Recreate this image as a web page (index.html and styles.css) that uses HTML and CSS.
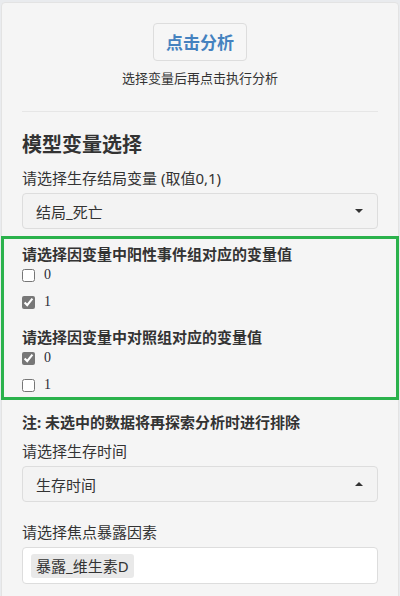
FILE: index.html
```html
<!DOCTYPE html>
<html lang="zh-CN">
    <head>
        <meta charset="UTF-8">
        <meta name="viewport" content="width=device-width, initial-scale=1.0">
        <title>模型变量选择</title>
        <link rel="stylesheet" href="styles.css">
    </head>
    <body>
        <div class="well">
            <div class="run">
                <button type="button" class="btn-run">点击分析</button>
                <p class="hint">选择变量后再点击执行分析</p>
            </div>
            <hr>
            <h3 class="title">模型变量选择</h3>

            <div class="form-group">
                <label class="field-label">请选择生存结局变量 (取值0,1)</label>
                <div class="select">
                    <span>结局_死亡</span>
                    <span class="caret"></span>
                </div>
            </div>

            <div class="outcome-box">
                <div class="check-group">
                    <label class="group-label">请选择因变量中阳性事件组对应的变量值</label>
                    <label class="option"><input type="checkbox" name="pos" value="0"><span>0</span></label>
                    <label class="option"><input type="checkbox" name="pos" value="1" checked><span>1</span></label>
                </div>
                <div class="check-group">
                    <label class="group-label">请选择因变量中对照组对应的变量值</label>
                    <label class="option"><input type="checkbox" name="ctrl" value="0" checked><span>0</span></label>
                    <label class="option"><input type="checkbox" name="ctrl" value="1"><span>1</span></label>
                </div>
            </div>

            <p class="note">注: 未选中的数据将再探索分析时进行排除</p>

            <div class="form-group">
                <label class="field-label">请选择生存时间</label>
                <div class="select">
                    <span>生存时间</span>
                    <span class="caret up"></span>
                </div>
            </div>

            <div class="form-group">
                <label class="field-label">请选择焦点暴露因素</label>
                <div class="multi">
                    <span class="chip">暴露_维生素D</span>
                </div>
            </div>
        </div>
    </body>
</html>
```

FILE: styles.css
```css
body {
    font-family: "Noto Sans", "Noto Sans CJK SC", sans-serif;
    background-color: #e9ebee;
    color: #333;
    margin: 0;
    padding: 2px 1px 0 1px;
}

.well {
    background-color: #f5f5f5;
    border: 1px solid #e3e3e3;
    border-radius: 4px;
    padding: 20px 20px 40px 20px;
}

.run {
    text-align: center;
}

.btn-run {
    font-family: "Noto Sans CJK SC", sans-serif;
    font-size: 17px;
    font-weight: bold;
    line-height: 24px;
    color: #4582bf;
    background-color: #f6f6f6;
    border: 1px solid #ddd;
    border-radius: 4px;
    padding: 6px 12px;
}

.hint {
    font-size: 13px;
    line-height: 18px;
    margin: 8px 0 0 0;
}

hr {
    border: 0;
    border-top: 1px solid #e6e6e6;
    margin: 24px 0 19px 0;
}

.title {
    font-size: 20px;
    font-weight: bold;
    line-height: 28px;
    margin: 0 0 9px 0;
}

.form-group {
    margin-bottom: 20px;
}

.field-label {
    display: block;
    font-size: 15px;
    line-height: 21px;
    margin-bottom: 4px;
}

.select {
    display: flex;
    align-items: center;
    justify-content: space-between;
    height: 34px;
    padding: 0 13px;
    border: 1px solid #ddd;
    border-radius: 4px;
    background-color: #f3f3f3;
    font-size: 15px;
}

.caret {
    width: 0;
    height: 0;
    border-left: 4px solid transparent;
    border-right: 4px solid transparent;
    border-top: 4px solid #333;
    margin-right: 1px;
}

.caret.up {
    border-top: 0;
    border-bottom: 4px solid #333;
}

.outcome-box {
    margin: -13px -21px 0 -21px;
    border: 3px solid #2bb24c;
    padding: 5px 18px 2px 18px;
}

.check-group + .check-group {
    margin-top: 15px;
}

.group-label {
    display: block;
    font-size: 15px;
    font-weight: bold;
    line-height: 21px;
}

.option {
    display: flex;
    align-items: center;
    height: 20px;
    font-family: "Liberation Serif", serif;
    font-size: 14px;
    color: #2b2b36;
}

.option + .option {
    margin-top: 7px;
}

.option input {
    width: 13px;
    height: 13px;
    margin: 0 9px 0 0;
    accent-color: #777;
}

.note {
    font-size: 15px;
    font-weight: bold;
    line-height: 21px;
    margin: 12px 0 8px 0;
}

.multi {
    display: flex;
    align-items: center;
    height: 35px;
    padding: 0 8px;
    border: 1px solid #ddd;
    border-radius: 4px;
    background-color: #fff;
}

.chip {
    font-size: 15px;
    line-height: 24px;
    padding: 0 5px;
    background-color: #e9e9e9;
    border-radius: 3px;
}
```
